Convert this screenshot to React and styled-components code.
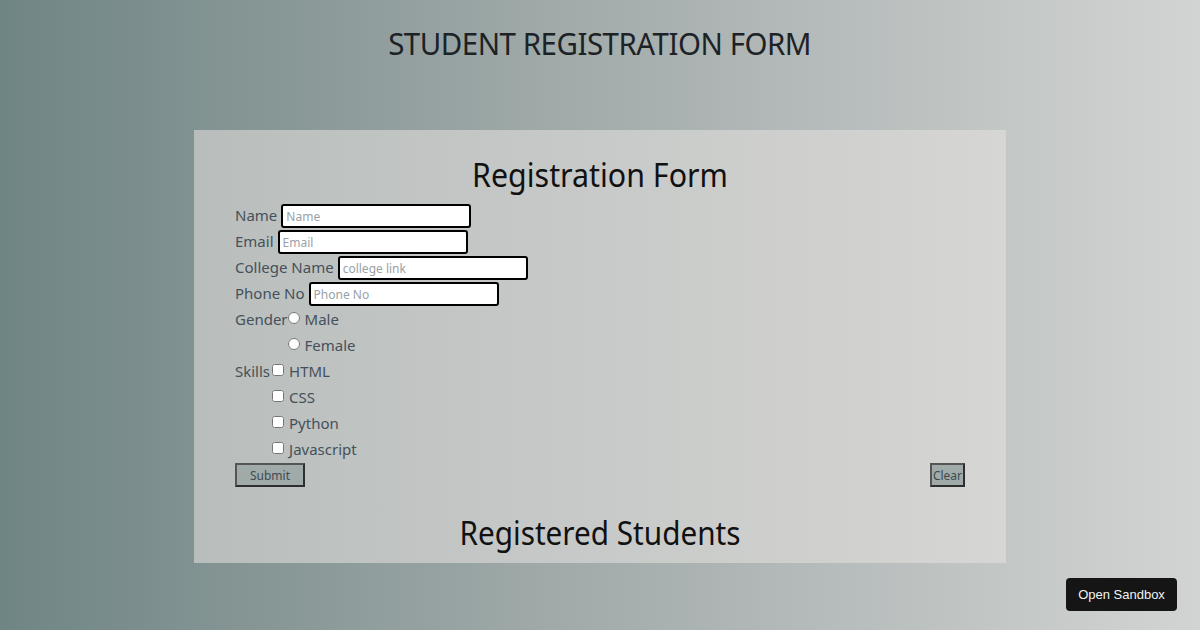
import React from "react";
import styled, { createGlobalStyle } from "styled-components";

const GlobalStyle = createGlobalStyle`
  html, body {
    margin: 0;
    padding: 0;
  }
  body {
    min-height: 630px;
    background: linear-gradient(to right, #6f8584 0%, #a4adac 50%, #d2d4d3 100%);
    font-family: "Noto Sans", sans-serif;
    overflow: hidden;
  }
`;

const Page = styled.div`
  height: 630px;
  display: flex;
  flex-direction: column;
  align-items: center;
  position: relative;
`;

const PageTitle = styled.h1`
  margin: 24px 0 0;
  font-size: 31px;
  font-weight: 400;
  line-height: 38px;
  color: #1d2226;
  letter-spacing: -0.5px;
  transform: scaleX(0.95);
`;

const Card = styled.div`
  margin-top: 68px;
  width: 812px;
  height: 433px;
  box-sizing: border-box;
  padding: 0 41px;
  background: linear-gradient(to right, #b9bebd, #d6d6d4);
  display: flex;
  flex-direction: column;
`;

const SectionTitle = styled.h2`
  margin: ${(p) => p.$top}px 0 0;
  text-align: center;
  font-size: 33px;
  font-weight: 400;
  line-height: 40px;
  color: #111;
  transform: scaleX(${(p) => p.$sx});
`;

const Form = styled.form`
  margin-top: 7px;
  display: flex;
  flex-direction: column;
`;

const Row = styled.div`
  display: flex;
  align-items: flex-start;
`;

const Label = styled.label`
  font-size: 15px;
  line-height: 26px;
  color: #45505a;
`;

const TextInput = styled.input`
  margin: 2px 0 0 4px;
  width: ${(p) => p.$w}px;
  height: 24px;
  box-sizing: border-box;
  border: 2px solid #000;
  border-radius: 3px;
  background: #fff;
  padding: 0 3px;
  font-family: "Noto Sans", sans-serif;
  font-size: 12px;
  &::placeholder {
    color: #9aa1a6;
  }
`;

const Options = styled.div`
  display: flex;
  flex-direction: column;
`;

const Option = styled.label`
  display: flex;
  align-items: center;
  font-size: 15px;
  line-height: 26px;
  color: #45505a;
`;

const Mark = styled.input`
  margin: 0 5px 0 ${(p) => p.$ml}px;
  width: 12px;
  height: 12px;
  position: relative;
  top: -1px;
`;

const Buttons = styled.div`
  margin-top: 1px;
  display: flex;
  justify-content: space-between;
`;

const FormButton = styled.button`
  width: ${(p) => p.$w}px;
  height: 24px;
  padding: 0;
  background: #a0aaa9;
  border: 2px solid #2e2e2e;
  border-top-color: #555;
  border-left-color: #555;
  font-family: "Noto Sans", sans-serif;
  font-size: 12px;
  color: #3f4a52;
`;

const SandboxButton = styled.button`
  position: absolute;
  right: 23px;
  bottom: 19px;
  width: 111px;
  height: 33px;
  border: none;
  border-radius: 4px;
  background: #151515;
  color: #f2f2f2;
  font-family: "Liberation Sans", Arial, sans-serif;
  font-size: 13px;
`;

export default function App() {
  return (
    <>
      <GlobalStyle />
      <Page>
        <PageTitle>STUDENT REGISTRATION FORM</PageTitle>
        <Card>
          <SectionTitle $top={25} $sx={0.92}>Registration Form</SectionTitle>
          <Form onSubmit={(e) => e.preventDefault()}>
            <Row>
              <Label>Name</Label>
              <TextInput $w={190} placeholder="Name" />
            </Row>
            <Row>
              <Label>Email</Label>
              <TextInput $w={190} placeholder="Email" />
            </Row>
            <Row>
              <Label>College Name</Label>
              <TextInput $w={190} placeholder="college link" />
            </Row>
            <Row>
              <Label>Phone No</Label>
              <TextInput $w={190} placeholder="Phone No" />
            </Row>
            <Row>
              <Label>Gender</Label>
              <Options>
                <Option>
                  <Mark type="radio" name="gender" $ml={0} />
                  Male
                </Option>
                <Option>
                  <Mark type="radio" name="gender" $ml={0} />
                  Female
                </Option>
              </Options>
            </Row>
            <Row>
              <Label>Skills</Label>
              <Options>
                <Option>
                  <Mark type="checkbox" $ml={2} />
                  HTML
                </Option>
                <Option>
                  <Mark type="checkbox" $ml={2} />
                  CSS
                </Option>
                <Option>
                  <Mark type="checkbox" $ml={2} />
                  Python
                </Option>
                <Option>
                  <Mark type="checkbox" $ml={2} />
                  Javascript
                </Option>
              </Options>
            </Row>
            <Buttons>
              <FormButton type="submit" $w={70}>Submit</FormButton>
              <FormButton type="reset" $w={35}>Clear</FormButton>
            </Buttons>
          </Form>
          <SectionTitle $top={26} $sx={0.9}>Registered Students</SectionTitle>
        </Card>
        <SandboxButton>Open Sandbox</SandboxButton>
      </Page>
    </>
  );
}
